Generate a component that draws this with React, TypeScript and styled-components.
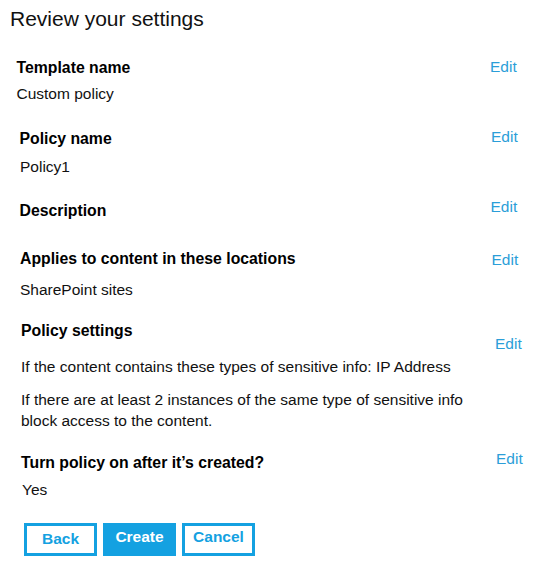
import React from "react";
import styled, { createGlobalStyle } from "styled-components";

const Global = createGlobalStyle`
  html, body { margin: 0; padding: 0; background: #ffffff; }
  body { font-family: "Liberation Sans", Arial, sans-serif; color: #000; }
`;

const Page = styled.div`
  width: 535px;
  padding-top: 7px;
  display: flex;
  flex-direction: column;
`;

const Title = styled.h1`
  margin: 0 0 0 10px;
  font-size: 21px;
  line-height: 24px;
  font-weight: 400;
  color: #111;
`;

const Section = styled.section<{ $mt: number; $indent: number }>`
  display: flex;
  align-items: flex-start;
  margin-top: ${(p) => p.$mt}px;
  padding-left: ${(p) => p.$indent}px;
`;

const Body = styled.div<{ $width: number }>`
  flex: 0 0 auto;
  width: ${(p) => p.$width}px;
  display: flex;
  flex-direction: column;
`;

const Heading = styled.h2`
  margin: 0;
  font-size: 15.8px;
  line-height: 18px;
  font-weight: 700;
  color: #000;
`;

const Value = styled.p<{ $mt: number; $lh?: number; $dx?: number }>`
  margin: ${(p) => p.$mt}px 0 0 ${(p) => p.$dx ?? 0}px;
  font-size: 15.5px;
  line-height: ${(p) => p.$lh ?? 18}px;
  color: #111;
`;

const EditLink = styled.a<{ $mt: number }>`
  margin-top: ${(p) => p.$mt}px;
  font-size: 15.5px;
  line-height: 18px;
  color: #2b9ed8;
  text-decoration: none;
  cursor: pointer;
`;

const Buttons = styled.div`
  display: flex;
  gap: 6px;
  margin-top: 23.4px;
  padding-left: 24px;
`;

const Button = styled.button<{ $primary?: boolean; $low?: boolean }>`
  box-sizing: border-box;
  width: 73px;
  height: 33px;
  padding: 0 0 ${(p) => (p.$low ? 0 : 4)}px 0;
  display: flex;
  align-items: center;
  justify-content: center;
  border: 3px solid #14a1e1;
  background: ${(p) => (p.$primary ? "#14a1e1" : "#ffffff")};
  color: ${(p) => (p.$primary ? "#ffffff" : "#14a1e1")};
  font-family: "Liberation Sans", Arial, sans-serif;
  font-size: 15.5px;
  line-height: 18px;
  font-weight: 700;
  cursor: pointer;
`;

type Row = {
  heading: string;
  mt: number;
  indent: number;
  editX: number;
  editMt: number;
  values: { text: React.ReactNode; mt: number; lh?: number; dx?: number }[];
};

const rows: Row[] = [
  {
    heading: "Template name",
    mt: 28.4,
    indent: 16.5,
    editX: 490,
    editMt: -1.7,
    values: [{ text: "Custom policy", mt: 8 }],
  },
  {
    heading: "Policy name",
    mt: 27,
    indent: 19.5,
    editX: 491,
    editMt: -2.7,
    values: [{ text: "Policy1", mt: 10, dx: 0.5 }],
  },
  {
    heading: "Description",
    mt: 25.7,
    indent: 19.5,
    editX: 490.5,
    editMt: -3.7,
    values: [],
  },
  {
    heading: "Applies to content in these locations",
    mt: 30.3,
    indent: 20,
    editX: 491.5,
    editMt: 1,
    values: [{ text: "SharePoint sites", mt: 12.7 }],
  },
  {
    heading: "Policy settings",
    mt: 23.3,
    indent: 21,
    editX: 495,
    editMt: 13,
    values: [
      {
        text: "If the content contains these types of sensitive info: IP Address",
        mt: 17.4,
      },
      {
        text: (
          <>
            If there are at least 2 instances of the same type of sensitive info
            <br />
            block access to the content.
          </>
        ),
        mt: 12.9,
        lh: 21.5,
      },
    ],
  },
  {
    heading: "Turn policy on after it\u2019s created?",
    mt: 22,
    indent: 21,
    editX: 496,
    editMt: -4,
    values: [{ text: "Yes", mt: 9.7, dx: 1 }],
  },
];

export default function App() {
  return (
    <>
      <Global />
      <Page>
        <Title>Review your settings</Title>
        {rows.map((r) => (
          <Section key={r.heading} $mt={r.mt} $indent={r.indent}>
            <Body $width={r.editX - r.indent}>
              <Heading>{r.heading}</Heading>
              {r.values.map((v, i) => (
                <Value key={i} $mt={v.mt} $lh={v.lh} $dx={v.dx}>
                  {v.text}
                </Value>
              ))}
            </Body>
            <EditLink $mt={r.editMt}>Edit</EditLink>
          </Section>
        ))}
        <Buttons>
          <Button $low>Back</Button>
          <Button $primary>Create</Button>
          <Button>Cancel</Button>
        </Buttons>
      </Page>
    </>
  );
}
